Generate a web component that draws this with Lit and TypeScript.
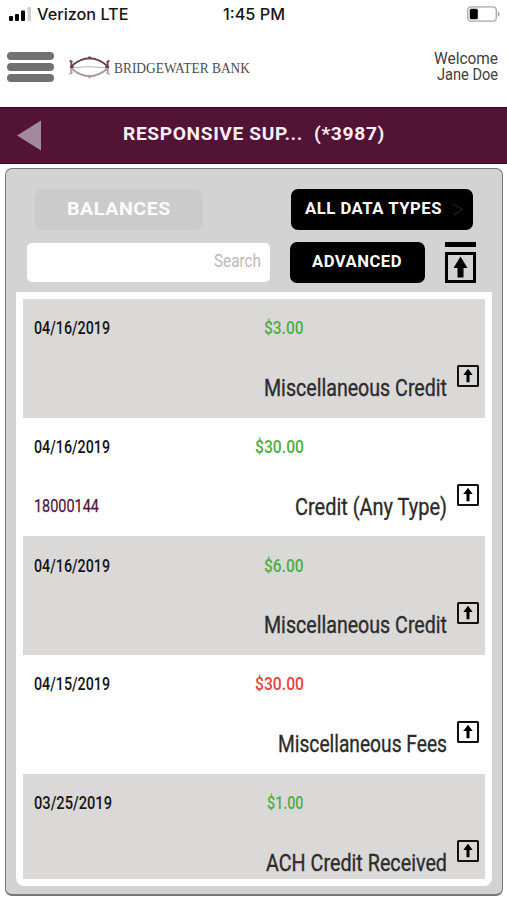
import { LitElement, html, svg, css, nothing } from "lit";
import { customElement, property } from "lit/decorators.js";

// A single line of text set to an exact measure; its layout box is as tall as the capitals.
@customElement("fit-text")
class FitText extends LitElement {
  @property() text = "";
  @property({ type: Number }) width = 0;
  @property({ type: Number }) cap = 10;
  static styles = css`
    :host { display: block; flex: none; }
    .line { display: block; overflow: visible; margin: -8px 0; }
    .glyphs { fill: currentColor; white-space: pre; }
  `;
  render() {
    return html`<svg class="line" width=${this.width} height=${this.cap + 16}>
      <text class="glyphs" x="0" y=${this.cap + 8} textLength=${this.width} lengthAdjust="spacingAndGlyphs">${this.text}</text>
    </svg>`;
  }
}

interface Entry {
  date: string; dateW: number;
  amount: string; amountW: number; debit?: boolean;
  label: string; labelW: number; ref?: string;
}

const entries: Entry[] = [
  { date: "04/16/2019", dateW: 76, amount: "$3.00", amountW: 39.5, label: "Miscellaneous Credit", labelW: 183 },
  { date: "04/16/2019", dateW: 76, amount: "$30.00", amountW: 49, label: "Credit (Any Type)", labelW: 152, ref: "18000144" },
  { date: "04/16/2019", dateW: 76, amount: "$6.00", amountW: 39.5, label: "Miscellaneous Credit", labelW: 183 },
  { date: "04/15/2019", dateW: 76, amount: "$30.00", amountW: 49, debit: true, label: "Miscellaneous Fees", labelW: 169 },
  { date: "03/25/2019", dateW: 78, amount: "$1.00", amountW: 36.5, label: "ACH Credit Received", labelW: 181 },
];

const arch = svg`
  <path d="M3 9.500Q20.500 -5 38 9.500" fill="none" stroke="#6b4454" stroke-width="2"/>
  <path d="M.5 4.500l3 1.500M1 11h4M2.300 5v6M40.500 4.500l-3 1.500M40 11h-4M38.700 5v6" fill="none" stroke="#6b4454" stroke-width="1.800"/>
  <rect x="19.300" y="0.500" width="2.400" height="2.800" fill="#6b4454"/>`;

@customElement("app-root")
class AppRoot extends LitElement {
  static styles = css`
    :host { display: flex; flex-direction: column; height: 900px; background: #fff; overflow: hidden; font-family: Roboto, "Liberation Sans", sans-serif; color: #000; }
    svg { display: block; flex: none; }
    .status { display: grid; grid-template-columns: 1fr auto 1fr; height: 28px; box-sizing: border-box; padding: 6px 7px 0 9px; }
    .carrier { display: flex; gap: 6px; padding-top: 1px; }
    .status-text { font: 500 15.4px Inter, sans-serif; color: #161616; margin: 3px 1px 0 0; }
    .carrier .status-text { margin: 2px 0 0; }
    .battery { justify-self: end; }
    .brand { display: flex; height: 79px; box-sizing: border-box; padding: 0 9px 0 7px; }
    .menu { display: flex; flex-direction: column; gap: 3.200px; width: 47px; margin-top: 24px; }
    .bar { height: 8px; border-radius: 4px; background: #717171; }
    .mark { margin: 28px 0 0 15px; }
    .bank { font: 14.600px "Liberation Serif", serif; color: #4c4c50; margin: 34.500px 0 0 4px; }
    .welcome { display: flex; flex-direction: column; align-items: flex-end; gap: 5px; margin: 25px 0 0 auto; font: 15.600px Roboto, sans-serif; color: #404040; }
    .title { display: flex; align-items: flex-start; height: 56.500px; box-sizing: border-box; padding-left: 17px; background: #521334; border-top: 1px solid #3d0a25; border-bottom: 1px solid #3d0a25; color: #fbeff7; font: 700 18.200px Roboto, sans-serif; letter-spacing: .6px; }
    .back { margin-top: 12px; }
    .account { margin: 18.800px 0 0 81.500px; }
    .number { margin: 18.800px 0 0 11.500px; }
    .panel { display: flex; flex-direction: column; width: 498px; height: 728px; box-sizing: border-box; margin: 4.500px 0 0 5px; border: 1.500px solid #777; border-bottom-width: 2px; border-radius: 7px; background: #d3d3d3; padding: 20px 10px 0; }
    .row1 { display: flex; justify-content: space-between; padding: 0 19.500px 0 19px; }
    .btn { display: flex; align-items: center; box-sizing: border-box; height: 41px; border-radius: 7px; background: #000; color: #fff; font: 700 15.800px Roboto, sans-serif; letter-spacing: .5px; }
    .balances { width: 168px; justify-content: center; background: #cbcbcb; color: #fbfbfb; font-size: 18px; padding-bottom: 3px; }
    .types { width: 182px; padding: 0 9px 2px 14px; justify-content: space-between; }
    .row2 { display: flex; align-items: flex-start; margin-top: 12px; padding: 0 16px 0 11px; }
    .search { display: flex; justify-content: flex-end; width: 243px; height: 39px; margin-top: 1px; border-radius: 5px; box-sizing: border-box; padding: 11px 9px 0; background: #fff; color: #bbb; font-size: 18.300px; }
    .advanced { width: 135px; margin-left: 20px; justify-content: center; padding: 0 1px 2px 0; }
    .export { margin-left: 20px; }
    .list { width: 476px; height: 594px; margin-top: 9px; box-sizing: border-box; padding: 7px; background: #fff; border-radius: 0 0 8px 8px; }
    .clip { height: 580px; overflow: hidden; }
    .entry { height: 118.700px; box-sizing: border-box; padding: 22.300px 6px 0 10.500px; color: #161616; }
    .entry:nth-child(odd) { background: #dad9d8; }
    .head { display: flex; justify-content: space-between; width: 270px; font-weight: 500; font-size: 18.300px; }
    .amount { color: #4fae45; }
    .debit { color: #e8453f; }
    .body { display: flex; align-items: flex-start; margin-top: 30.700px; }
    .ref { margin-top: 15.500px; color: #521334; font-size: 18.300px; stroke: currentColor; stroke-width: .25px; }
    .label { margin: 14px 0 0 auto; color: #2c2c2c; font-size: 24px; stroke: currentColor; stroke-width: .35px; }
    .send { margin-left: 10px; }
  `;

  row(e: Entry) {
    return html`<div class="entry">
      <div class="head">
        <fit-text .text=${e.date} .width=${e.dateW} .cap=${13}></fit-text>
        <fit-text class="amount ${e.debit ? "debit" : ""}" .text=${e.amount} .width=${e.amountW} .cap=${13}></fit-text>
      </div>
      <div class="body">
        ${e.ref ? html`<fit-text class="ref" .text=${e.ref} .width=${65} .cap=${13}></fit-text>` : nothing}
        <fit-text class="label" .text=${e.label} .width=${e.labelW} .cap=${17}></fit-text>
        <svg class="send" width="22" height="22" viewBox="0 0 22 22">
          <rect x="1" y="1" width="20" height="20" rx=".5" fill="none" stroke="#111" stroke-width="2"/>
          <path d="M11 3.800l4.700 6.200h-3.200v7.200h-3v-7.200h-3.200z" fill="#000"/>
        </svg>
      </div>
    </div>`;
  }

  render() {
    return html`
      <div class="status">
        <div class="carrier">
          <svg width="22" height="14" viewBox="0 0 22 14">
            <rect x="0" y="9" width="4" height="5" rx="1"/><rect x="6" y="7" width="4" height="7" rx="1"/>
            <rect x="12" y="3.500" width="4" height="10.500" rx="1"/><rect x="18.500" y="0" width="3.500" height="14" rx="1" fill="#d0d0d0"/>
          </svg>
          <fit-text class="status-text" .text=${"Verizon LTE"} .width=${91.5} .cap=${11}></fit-text>
        </div>
        <fit-text class="status-text" .text=${"1:45 PM"} .width=${62} .cap=${11}></fit-text>
        <svg class="battery" width="33" height="16" viewBox="0 0 33 16">
          <rect x=".800" y=".800" width="28.500" height="14.400" rx="3.500" fill="none" stroke="#a5a5a5" stroke-width="1.300"/>
          <rect x="2.800" y="2.800" width="8" height="10.400" rx="1.500"/>
          <path d="M30.800 5.500q2 .7 2 2.500t-2 2.500z" fill="#a5a5a5"/>
        </svg>
      </div>
      <div class="brand">
        <div class="menu"><div class="bar"></div><div class="bar"></div><div class="bar"></div></div>
        <svg class="mark" width="41" height="23" viewBox="0 0 41 23">
          <g>${arch}</g>
          <g transform="matrix(1 0 0 -1 0 22.500)" opacity=".55">${arch}</g>
          <path d="M4 11.800Q20 9.500 37 11.800" fill="none" stroke="#bcb3b0" stroke-width="1"/>
        </svg>
        <fit-text class="bank" .text=${"BRIDGEWATER BANK"} .width=${136} .cap=${10}></fit-text>
        <div class="welcome">
          <fit-text .text=${"Welcome"} .width=${64} .cap=${11}></fit-text>
          <fit-text .text=${"Jane Doe"} .width=${61} .cap=${11}></fit-text>
        </div>
      </div>
      <div class="title">
        <svg class="back" width="24" height="31" viewBox="0 0 24 31"><path d="M0 15.500L24 .5v30z" fill="#a488a0"/></svg>
        <fit-text class="account" .text=${"RESPONSIVE SUP..."} .width=${180} .cap=${13}></fit-text>
        <fit-text class="number" .text=${"(*3987)"} .width=${71} .cap=${13}></fit-text>
      </div>
      <div class="panel">
        <div class="row1">
          <div class="btn balances"><fit-text .text=${"BALANCES"} .width=${104} .cap=${13}></fit-text></div>
          <div class="btn types">
            <fit-text .text=${"ALL DATA TYPES"} .width=${137} .cap=${11.3}></fit-text>
            <svg width="12" height="14" viewBox="0 0 12 14"><path d="M1 2l10 5.500L1 13" fill="none" stroke="#262626" stroke-width="1"/></svg>
          </div>
        </div>
        <div class="row2">
          <div class="search"><fit-text .text=${"Search"} .width=${47} .cap=${13}></fit-text></div>
          <div class="btn advanced"><fit-text .text=${"ADVANCED"} .width=${90} .cap=${11.3}></fit-text></div>
          <svg class="export" width="31" height="41" viewBox="0 0 31 41">
            <path d="M0 0h31v5H0z"/>
            <rect x="1.500" y="11.500" width="28" height="28" fill="none" stroke="#000" stroke-width="3"/>
            <path d="M15.500 14.500l7 11.500h-4v9.500h-6v-9.500h-4z"/>
          </svg>
        </div>
        <div class="list"><div class="clip">${entries.map((e) => this.row(e))}</div></div>
      </div>`;
  }
}
